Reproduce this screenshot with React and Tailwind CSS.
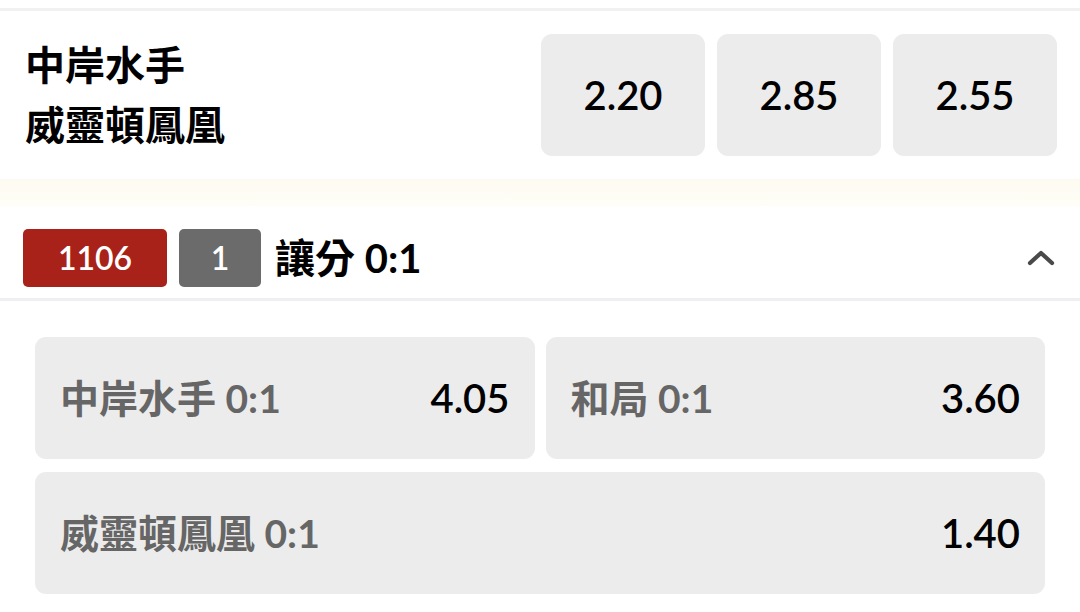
// Match odds card — 1X2 row + handicap market
const CJK = "font-['Lato','Noto_Sans_CJK_TC','Noto_Sans',sans-serif]"

const topOdds = ['2.20', '2.85', '2.55']

const handicap = [
  { label: '中岸水手 0:1', odds: '4.05' },
  { label: '和局 0:1', odds: '3.60' },
  { label: '威靈頓鳳凰 0:1', odds: '1.40', wide: true },
]

function ChevronUp() {
  return (
    <svg width="28" height="20" viewBox="0 0 28 20" fill="none">
      <path d="M3 15 L14 5 L25 15" stroke="#4a4a4a" strokeWidth="4.2" strokeLinecap="round" strokeLinejoin="round" />
    </svg>
  )
}

export default function App() {
  return (
    <div className={`w-[1080px] h-[612px] overflow-hidden bg-white ${CJK}`}>
      <div className="h-[11px] border-b-[3px] border-[#f1f1f1]" />

      {/* ── Match row ── */}
      <div className="flex items-center justify-between pl-[25px] pr-[23px] py-[23px]">
        <div className="flex flex-col gap-[18px] text-[40px] leading-[42px] font-semibold text-black">
          <p>中岸水手</p>
          <p>威靈頓鳳凰</p>
        </div>
        <div className="flex gap-[12px]">
          {topOdds.map(o => (
            <div key={o} className="w-[164px] h-[122px] rounded-[11px] bg-[#ececec] flex items-center justify-center text-[40px] font-semibold text-black">
              {o}
            </div>
          ))}
        </div>
      </div>

      <div className="h-[27px] bg-gradient-to-b from-[#fdfbf1] to-[#fefdf7]" />

      {/* ── Market header ── */}
      <div className="flex items-center justify-between pl-[23px] pr-[25px] pt-[22px] pb-[10px] border-b-[3px] border-[#efeff3]">
        <div className="flex items-center gap-[12px]">
          <span className="w-[144px] h-[58px] rounded-[5px] bg-[#a8221a] text-white text-[32px] font-semibold flex items-center justify-center">1106</span>
          <span className="w-[82px] h-[58px] rounded-[5px] bg-[#6b6b6b] text-white text-[32px] font-semibold flex items-center justify-center">1</span>
          <span className="ml-[2px] text-[40px] font-bold text-black">讓分 0:1</span>
        </div>
        <ChevronUp />
      </div>

      {/* ── Selections ── */}
      <div className="grid grid-cols-2 gap-x-[11px] gap-y-[13px] px-[35px] pt-[36px]">
        {handicap.map(h => (
          <div key={h.label} className={`${h.wide ? 'col-span-2' : ''} h-[122px] rounded-[11px] bg-[#ececec] flex items-center justify-between pl-[25px] pr-[25px]`}>
            <span className="text-[39px] font-bold text-[#666666]">{h.label}</span>
            <span className="text-[40px] font-semibold text-black">{h.odds}</span>
          </div>
        ))}
      </div>
    </div>
  )
}
